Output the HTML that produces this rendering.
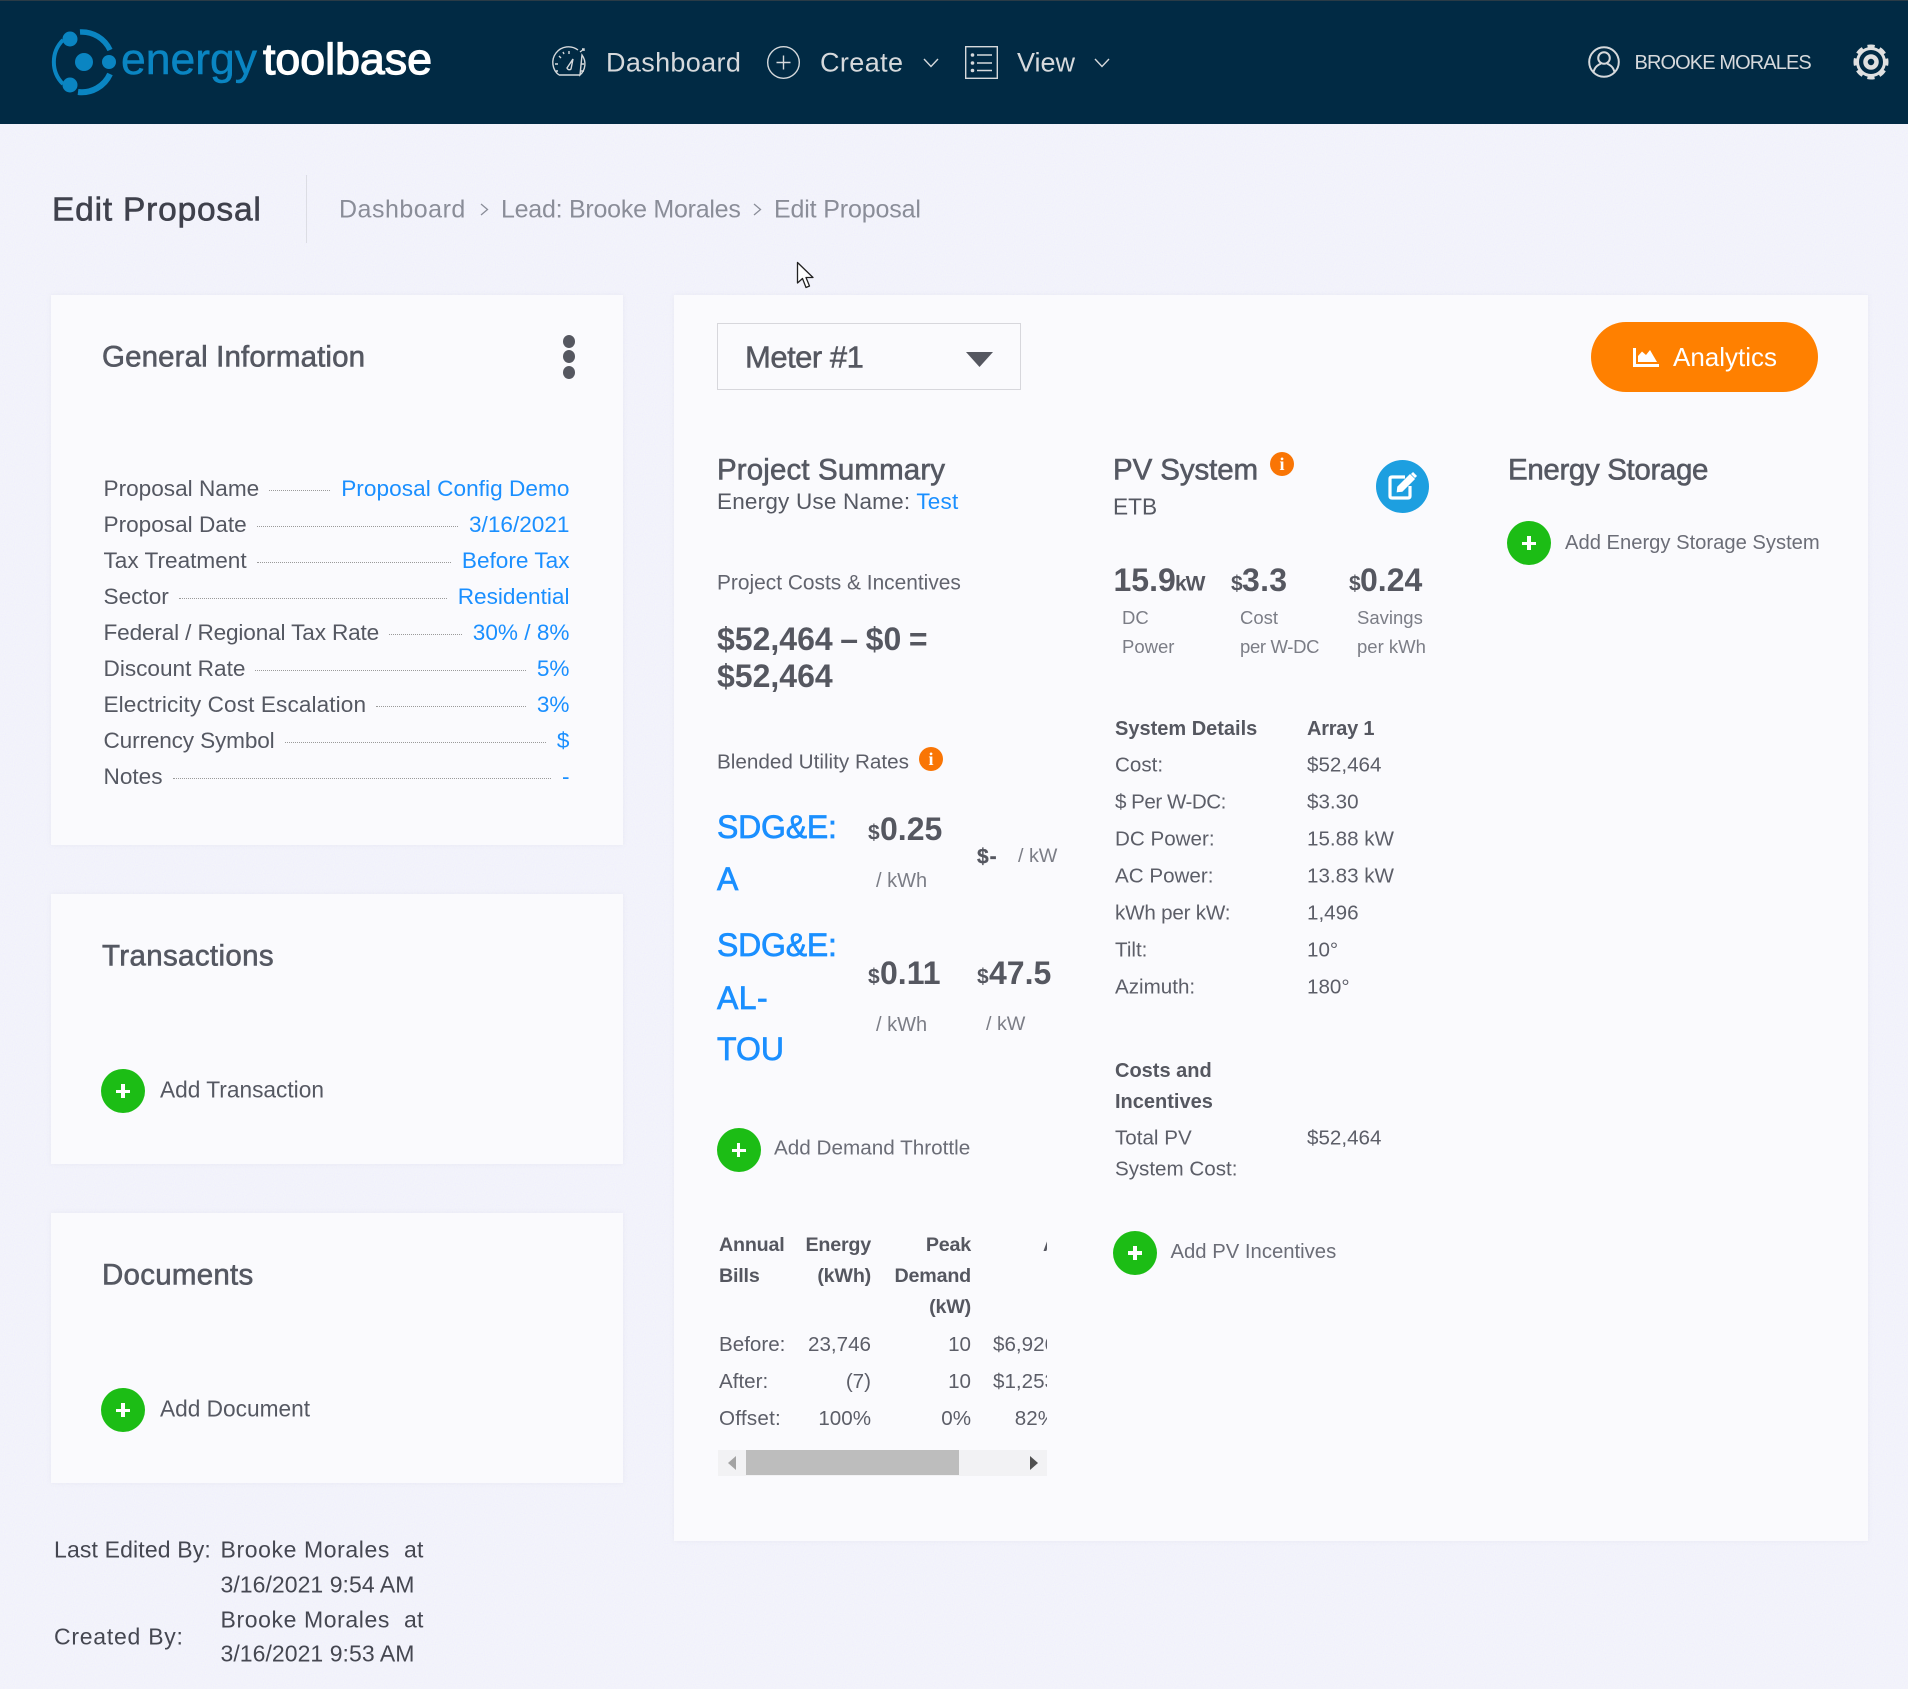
<!DOCTYPE html>
<html lang="en"><head><meta charset="utf-8"><title>Edit Proposal</title>
<style>
*{box-sizing:border-box}
html,body{margin:0;padding:0}
body{width:1908px;height:1689px;position:relative;overflow:hidden;background:#f3f4fa;font-family:"Liberation Sans",Arial,sans-serif;color:#555862}
header{position:absolute;left:0;top:0;width:1908px;height:124px;background:#012a44;border-top:1px solid #2a3b46}
.card{position:absolute;background:#fafafd;box-shadow:0 0 5px rgba(120,120,140,.08)}
.t{position:absolute;white-space:nowrap;line-height:1;transform:translateY(-50%);font-size:22.7px}
.nav{font-size:27px;color:#d6d9dc;letter-spacing:.35px}
.crumb{font-size:25px;color:#8a8d98;letter-spacing:-.25px}
.h{font-size:29.5px;letter-spacing:.13px;-webkit-text-stroke:.6px #555862;color:#555862}
.b{color:#1a8fff}
.lt{color:#6b6d77;font-size:20.4px}
.big{font-size:32px;font-weight:bold;color:#555760}
.sm{font-size:21px;font-weight:bold;color:#555760}
.rate{font-size:32px;color:#1a8fff;-webkit-text-stroke:.7px #1a8fff}
.sub{font-size:20.3px;color:#7b7d86}
.lab{font-size:18.5px;color:#7b7d86}
.d{font-size:20.6px;color:#5c5e68}
.db{font-size:20px;font-weight:bold;color:#555760}
.foot{font-size:23px;color:#454751;letter-spacing:.15px}
.add{position:absolute;width:44px;height:44px;border-radius:50%;background:#1cbd15;transform:translate(-50%,-50%)}
.add:before,.add:after{content:"";position:absolute;background:#fff;left:15px;top:20.5px;width:14px;height:3.6px}
.add:after{left:20.2px;top:15.3px;width:3.6px;height:14px}
.info{position:absolute;width:24px;height:24px;border-radius:50%;background:#f97505;color:#fff;font:bold 18px/24px "Liberation Serif",serif;text-align:center;transform:translate(-50%,-50%)}
.list{position:absolute;left:103.5px;top:470.5px;width:466px}
.row{display:flex;align-items:center;height:36.05px;font-size:22.6px;line-height:36px;white-space:nowrap;color:#555862}
.row i{flex:1;height:0;border-top:1px dotted #9a9a9a;margin:4px 11px 0 10px}
.row span:last-child{color:#1a8fff}
.tbl{position:absolute;left:719px;top:1230px;width:328px;height:210px;overflow:hidden}
table{border-collapse:collapse;table-layout:fixed;width:337px}
td,th{padding:0;font-size:20.6px;color:#5c5e68;white-space:nowrap;text-align:right;height:37px;vertical-align:middle}
th{font-weight:bold;line-height:31px;font-size:19.7px;letter-spacing:-.2px;color:#555760;vertical-align:top;height:96px}
td:first-child,th:first-child{text-align:left}
.dot{position:absolute;left:563px;width:12px;height:13px;border-radius:50%;background:#555760}
svg{position:absolute;overflow:visible}
</style></head><body>
<svg style="left:0;top:0" width="1908" height="1689"><filter id="n" x="0" y="0" width="100%" height="100%"><feTurbulence type="fractalNoise" baseFrequency=".9" numOctaves="1" seed="3"/><feColorMatrix type="matrix" values="0 0 0 0 .84  0 0 0 0 .82  0 0 0 0 1  1.2 0 0 0 -.45"/></filter><rect width="1908" height="1689" filter="url(#n)"/></svg>
<header></header>

<!-- logo -->
<svg style="left:0;top:0" width="440" height="124" viewBox="0 0 440 124">
<g fill="none" stroke="#0a85c2" stroke-width="5">
<path d="M63 40 A31 31 0 0 0 63 84" stroke-width="4"/>
<path d="M80 32 A31 31 0 0 1 110 50" stroke-width="5.5"/>
<path d="M110 74 A31 31 0 0 1 78 92" stroke-width="6"/>
</g>
<g fill="#0a85c2"><circle cx="70" cy="39" r="7.5"/><circle cx="70" cy="85" r="7.5"/><circle cx="84" cy="62" r="9"/><circle cx="109" cy="62" r="7"/></g>
<text x="121" y="74" font-size="44" fill="#0a85c2" stroke="#0a85c2" stroke-width=".5" textLength="136" lengthAdjust="spacingAndGlyphs" font-family="Liberation Sans">energy</text>
<text x="263" y="74" font-size="44" fill="#fff" stroke="#fff" stroke-width="1.2" textLength="169" lengthAdjust="spacingAndGlyphs" font-family="Liberation Sans">toolbase</text>
</svg>

<!-- nav -->
<svg style="left:553px;top:48px" width="34" height="28" viewBox="0 0 34 28" fill="none" stroke="#d6d9dc" stroke-width="1.4">
<path d="M6 27 A15 15 0 0 1 25 2 M29 7 A15 15 0 0 1 27 27 Z M6 27 H27"/>
<path d="M16 3 V6 M6 8 L8 10 M2 16 H5 M28 16 H31 M3 23 H5 M28 23 H31 M10 4 L11 6 M27 4 L31 1 M29 1 H31 V3"/>
<path d="M14 20 L20 11 L18 21 A2.4 2.4 0 0 1 14 20 Z"/>
</svg>
<span class="t nav" style="left:606px;top:62.5px">Dashboard</span>
<svg style="left:767px;top:46px" width="33" height="33" viewBox="0 0 33 33" fill="none" stroke="#d6d9dc" stroke-width="1.4"><circle cx="16.5" cy="16.5" r="15.8"/><path d="M16.5 9.5 V23.5 M9.5 16.5 H23.5"/></svg>
<span class="t nav" style="left:820px;top:62.5px;letter-spacing:.4px">Create</span>
<svg style="left:923px;top:58px" width="16" height="10" viewBox="0 0 16 10" fill="none" stroke="#d6d9dc" stroke-width="1.4"><path d="M1 1 L8 8.5 L15 1"/></svg>
<svg style="left:965px;top:46px" width="33" height="33" viewBox="0 0 33 33" fill="none" stroke="#d6d9dc" stroke-width="1.4"><rect x=".7" y=".7" width="31.6" height="31.6"/><path d="M12 9 H27 M12 17 H27 M12 24.5 H27"/><g fill="#d6d9dc" stroke="none"><circle cx="7.5" cy="9" r="1.8"/><circle cx="7.5" cy="17" r="1.8"/><circle cx="7.5" cy="24.5" r="1.8"/></g></svg>
<span class="t nav" style="left:1017px;top:62.5px;letter-spacing:0">View</span>
<svg style="left:1094px;top:58px" width="16" height="10" viewBox="0 0 16 10" fill="none" stroke="#d6d9dc" stroke-width="1.4"><path d="M1 1 L8 8.5 L15 1"/></svg>

<svg style="left:1588px;top:46px" width="32" height="32" viewBox="0 0 32 32" fill="none" stroke="#d6d9dc" stroke-width="2"><circle cx="16" cy="16" r="14.8"/><circle cx="16" cy="12" r="5.8"/><path d="M5.5 26 C7 20 11 18.5 13 17.5 M26.5 26 C25 20 21 18.5 19 17.5"/></svg>
<span class="t nav" style="left:1634.5px;top:62.5px;font-size:20px;letter-spacing:-.9px">BROOKE MORALES</span>
<svg style="left:1853px;top:44px" width="36" height="36" viewBox="0 0 36 36" fill="none" stroke="#e0e0e0"><circle cx="18" cy="18" r="13.5" stroke-width="3"/><circle cx="18" cy="18" r="15.5" stroke-width="4" stroke-dasharray="7 5.17" stroke-dashoffset="3.5"/><circle cx="18" cy="18" r="5.5" stroke-width="4.5"/></svg>

<!-- page title -->
<span class="t" style="left:52px;top:209.5px;font-size:33.5px;letter-spacing:.8px;color:#3f414c;-webkit-text-stroke:.6px #3f414c">Edit Proposal</span>
<div style="position:absolute;left:306px;top:175px;width:1px;height:68px;background:#dcdde4"></div>
<span class="t crumb" style="left:339px;top:209.5px;letter-spacing:.5px">Dashboard</span>
<svg style="left:480px;top:203px" width="9" height="13" viewBox="0 0 9 13" fill="none" stroke="#8a8d98" stroke-width="1.3"><path d="M1 1 L7.5 6.5 L1 12"/></svg>
<span class="t crumb" style="left:501px;top:209.5px">Lead: Brooke Morales</span>
<svg style="left:753px;top:203px" width="9" height="13" viewBox="0 0 9 13" fill="none" stroke="#8a8d98" stroke-width="1.3"><path d="M1 1 L7.5 6.5 L1 12"/></svg>
<span class="t crumb" style="left:774px;top:209.5px;letter-spacing:-.15px">Edit Proposal</span>

<!-- left cards -->
<div class="card" style="left:51px;top:295px;width:572px;height:550px"></div>
<div class="card" style="left:51px;top:894px;width:572px;height:270px"></div>
<div class="card" style="left:51px;top:1213px;width:572px;height:270px"></div>
<div class="card" style="left:674px;top:295px;width:1194px;height:1246px"></div>

<!-- cursor -->
<svg style="left:796px;top:261px" width="20" height="29" viewBox="0 0 20 29"><path d="M1.5 1.5 V22 L6.5 17.5 L10 26.5 L13.5 25 L10 16.5 H17 Z" fill="#fff" stroke="#222" stroke-width="1.3" stroke-linejoin="round"/></svg>

<span class="t h" style="left:102px;top:357px">General Information</span>
<div class="dot" style="top:335px"></div><div class="dot" style="top:350px"></div><div class="dot" style="top:366px"></div>

<div class="list">
<div class="row"><span>Proposal Name</span><i></i><span style="letter-spacing:.05px">Proposal Config Demo</span></div>
<div class="row"><span>Proposal Date</span><i></i><span>3/16/2021</span></div>
<div class="row"><span>Tax Treatment</span><i></i><span>Before Tax</span></div>
<div class="row"><span>Sector</span><i></i><span>Residential</span></div>
<div class="row"><span style="letter-spacing:-.15px">Federal / Regional Tax Rate</span><i></i><span>30% / 8%</span></div>
<div class="row"><span>Discount Rate</span><i></i><span>5%</span></div>
<div class="row"><span style="letter-spacing:.1px">Electricity Cost Escalation</span><i></i><span>3%</span></div>
<div class="row"><span style="letter-spacing:-.15px">Currency Symbol</span><i></i><span>$</span></div>
<div class="row"><span>Notes</span><i></i><span>-</span></div>
</div>

<span class="t h" style="left:102px;top:956px;letter-spacing:.35px">Transactions</span>
<div class="add" style="left:123px;top:1091px"></div>
<span class="t" style="left:160px;top:1089.5px">Add Transaction</span>
<span class="t h" style="left:102px;top:1275px;letter-spacing:.25px">Documents</span>
<div class="add" style="left:123px;top:1410px"></div>
<span class="t" style="left:160px;top:1408.5px">Add Document</span>

<!-- footer -->
<span class="t foot" style="left:54px;top:1550px">Last Edited By:</span>
<span class="t foot" style="left:220.5px;top:1550px;letter-spacing:.6px">Brooke Morales</span>
<span class="t foot" style="left:404px;top:1550px">at</span>
<span class="t foot" style="left:220.5px;top:1584.5px;letter-spacing:.05px">3/16/2021 9:54 AM</span>
<span class="t foot" style="left:54px;top:1637px;letter-spacing:.75px">Created By:</span>
<span class="t foot" style="left:220.5px;top:1620px;letter-spacing:.6px">Brooke Morales</span>
<span class="t foot" style="left:404px;top:1620px">at</span>
<span class="t foot" style="left:220.5px;top:1654px;letter-spacing:.05px">3/16/2021 9:53 AM</span>

<!-- meter -->
<div style="position:absolute;left:717px;top:323px;width:304px;height:67px;border:1px solid #d7d7dc"></div>
<span class="t" style="left:745px;top:357px;font-size:31px;letter-spacing:-.5px;color:#555760;-webkit-text-stroke:.5px #555760">Meter #1</span>
<svg style="left:966px;top:352px" width="27" height="15" viewBox="0 0 27 15"><path d="M0 0 H27 L13.5 15 Z" fill="#555760"/></svg>

<div style="position:absolute;left:1591px;top:322px;width:227px;height:70px;border-radius:35px;background:#ff8000"></div>
<svg style="left:1633px;top:348px" width="26" height="19" viewBox="0 0 26 19"><path d="M0 0 H3 V16 H26 V19 H0 Z M5 14 V8 L9 3.5 L13 7 L17 2 L24 14 Z" fill="#fff"/></svg>
<span class="t" style="left:1673px;top:357px;font-size:26px;color:#fff;letter-spacing:0">Analytics</span>

<!-- project summary -->
<span class="t h" style="left:717px;top:470px">Project Summary</span>
<span class="t" style="left:717px;top:501.5px;font-size:22.5px;letter-spacing:.2px">Energy Use Name: <span class="b">Test</span></span>
<span class="t" style="left:717px;top:584px;font-size:20.9px;color:#62646e">Project Costs &amp; Incentives</span>
<span class="t big" style="left:717px;top:639px;word-spacing:-1.3px">$52,464 – $0 =</span>
<span class="t big" style="left:717px;top:676px">$52,464</span>

<span class="t" style="left:717px;top:763px;font-size:20.7px;color:#5c5e68">Blended Utility Rates</span>
<div class="info" style="left:931px;top:759px">i</div>

<span class="t rate" style="left:717px;top:827px;letter-spacing:-.2px">SDG&amp;E:</span>
<span class="t rate" style="left:717px;top:879px">A</span>
<span class="t rate" style="left:717px;top:945px;letter-spacing:-.2px">SDG&amp;E:</span>
<span class="t rate" style="left:717px;top:998px;letter-spacing:.4px">AL-</span>
<span class="t rate" style="left:717px;top:1049px">TOU</span>

<span class="t sm" style="left:868px;top:833px">$</span><span class="t big" style="left:880px;top:829px">0.25</span>
<span class="t sub" style="left:876px;top:881px;font-size:20px">/ kWh</span>
<span class="t sm" style="left:977px;top:857px;letter-spacing:1px;-webkit-text-stroke:.3px #555760">$-</span>
<span class="t sub" style="left:1018px;top:857px;font-size:19.7px">/ kW</span>
<span class="t sm" style="left:868px;top:977px">$</span><span class="t big" style="left:880px;top:973px">0.11</span>
<span class="t sub" style="left:876px;top:1025px;font-size:20px">/ kWh</span>
<span class="t sm" style="left:977px;top:977px">$</span><span class="t big" style="left:989px;top:973px">47.5</span>
<span class="t sub" style="left:986px;top:1025px;font-size:19.7px">/ kW</span>

<div class="add" style="left:738.5px;top:1150px"></div>
<span class="t lt" style="left:774px;top:1148.5px;font-size:20.7px">Add Demand Throttle</span>

<div class="tbl"><table>
<colgroup><col style="width:72px"><col style="width:80px"><col style="width:100px"><col style="width:85px"></colgroup>
<tr><th>Annual<br>Bills</th><th>Energy<br>(kWh)</th><th>Peak<br>Demand<br>(kW)</th><th style="text-align:left;padding-left:72px">Annual</th></tr>
<tr><td>Before:</td><td>23,746</td><td>10</td><td>$6,926</td></tr>
<tr><td>After:</td><td>(7)</td><td>10</td><td>$1,253</td></tr>
<tr><td style="letter-spacing:.25px">Offset:</td><td>100%</td><td>0%</td><td>82%</td></tr>
</table></div>
<div style="position:absolute;left:718px;top:1450px;width:329px;height:26px;background:#f2f2f4"></div>
<div style="position:absolute;left:746px;top:1450px;width:213px;height:25px;background:#bdbdbd"></div>
<svg style="left:728px;top:1456px" width="8" height="14" viewBox="0 0 8 14"><path d="M8 0 V14 L0 7 Z" fill="#a3a3a3"/></svg>
<svg style="left:1030px;top:1456px" width="8" height="14" viewBox="0 0 8 14"><path d="M0 0 V14 L8 7 Z" fill="#505050"/></svg>

<!-- PV -->
<span class="t h" style="left:1113px;top:470px;letter-spacing:-.1px">PV System</span>
<div class="info" style="left:1282px;top:464px">i</div>
<span class="t" style="left:1113px;top:507px">ETB</span>
<div style="position:absolute;left:1376px;top:460px;width:53px;height:53px;border-radius:50%;background:#1d9fe0"></div>
<svg style="left:1388px;top:471px" width="30" height="30" viewBox="0 0 30 30" fill="none" stroke="#fff" stroke-width="3.2"><path d="M17 6 H4 Q2 6 2 8 V25 Q2 27 4 27 H20 Q22 27 22 25 V15"/><path d="M10 16 L22 4 L26 8 L14 20 L9.5 20.5 Z" fill="#fff" stroke-width="1.5"/><path d="M24 2 L28 6" stroke-width="3"/></svg>

<span class="t big" style="left:1113.5px;top:580px">15.9</span><span class="t sm" style="left:1175px;top:584px;font-size:21px;letter-spacing:-1px">kW</span>
<span class="t sm" style="left:1231px;top:584px">$</span><span class="t big" style="left:1242px;top:580px;letter-spacing:.3px">3.3</span>
<span class="t sm" style="left:1349px;top:584px">$</span><span class="t big" style="left:1360px;top:580px">0.24</span>
<span class="t lab" style="left:1122px;top:618px">DC</span><span class="t lab" style="left:1122px;top:646.5px">Power</span>
<span class="t lab" style="left:1240px;top:618px">Cost</span><span class="t lab" style="left:1240px;top:646.5px;letter-spacing:-.35px">per W-DC</span>
<span class="t lab" style="left:1357px;top:618px">Savings</span><span class="t lab" style="left:1357px;top:646.5px">per kWh</span>

<span class="t db" style="left:1115px;top:729px">System Details</span><span class="t db" style="left:1307px;top:729px;letter-spacing:-.25px">Array 1</span>
<span class="t d" style="left:1115px;top:766px">Cost:</span><span class="t d" style="left:1307px;top:766px">$52,464</span>
<span class="t d" style="left:1115px;top:803px;letter-spacing:-.5px">$ Per W-DC:</span><span class="t d" style="left:1307px;top:803px">$3.30</span>
<span class="t d" style="left:1115px;top:840px">DC Power:</span><span class="t d" style="left:1307px;top:840px">15.88 kW</span>
<span class="t d" style="left:1115px;top:877px">AC Power:</span><span class="t d" style="left:1307px;top:877px">13.83 kW</span>
<span class="t d" style="left:1115px;top:914px;letter-spacing:-.2px">kWh per kW:</span><span class="t d" style="left:1307px;top:914px">1,496</span>
<span class="t d" style="left:1115px;top:951px">Tilt:</span><span class="t d" style="left:1307px;top:951px">10°</span>
<span class="t d" style="left:1115px;top:988px">Azimuth:</span><span class="t d" style="left:1307px;top:988px">180°</span>

<span class="t db" style="left:1115px;top:1071px">Costs and</span>
<span class="t db" style="left:1115px;top:1102px">Incentives</span>
<span class="t d" style="left:1115px;top:1139px">Total PV</span><span class="t d" style="left:1307px;top:1139px">$52,464</span>
<span class="t d" style="left:1115px;top:1170px">System Cost:</span>

<div class="add" style="left:1135px;top:1252.5px"></div>
<span class="t lt" style="left:1170.5px;top:1251.5px;font-size:20.3px">Add PV Incentives</span>

<!-- Energy storage -->
<span class="t h" style="left:1508px;top:470px;letter-spacing:-.35px">Energy Storage</span>
<div class="add" style="left:1529px;top:543px"></div>
<span class="t lt" style="left:1565px;top:542.5px;font-size:20.2px">Add Energy Storage System</span>
</body></html>
